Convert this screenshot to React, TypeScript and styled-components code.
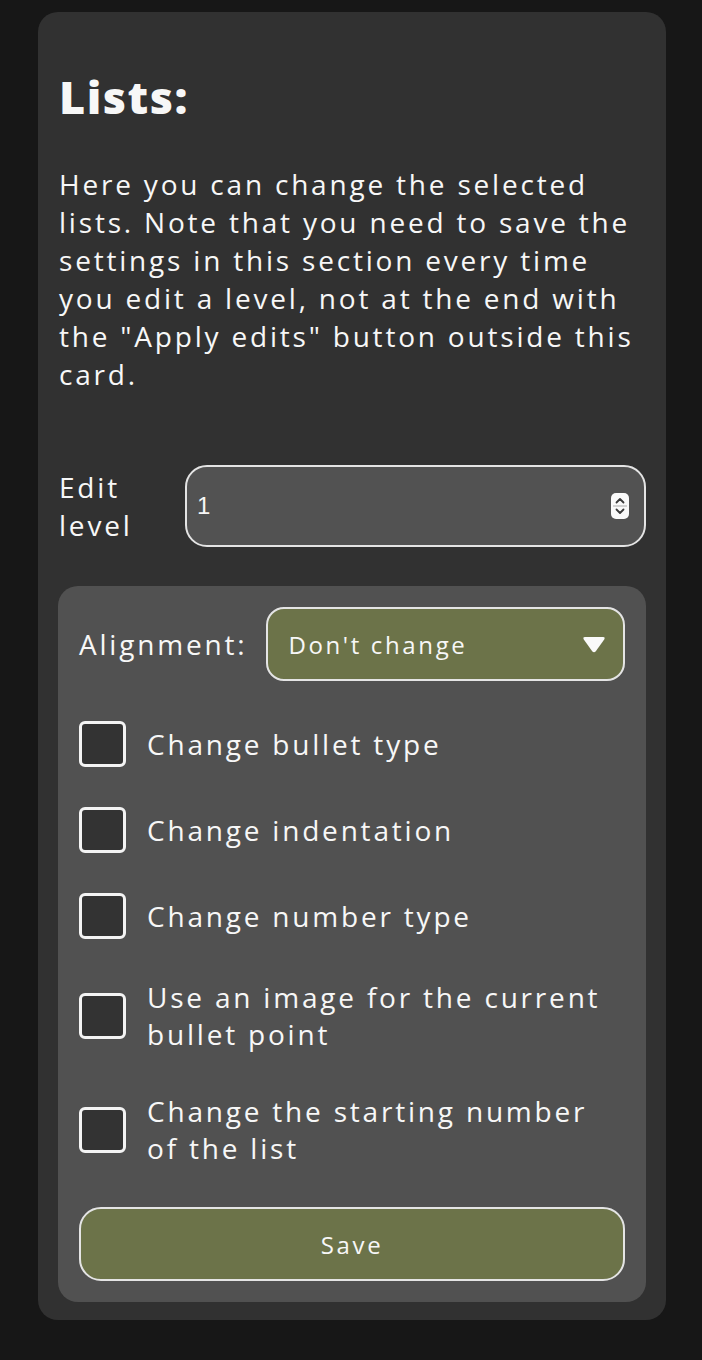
import styled, { createGlobalStyle } from "styled-components";
import { FC } from "react";

const GlobalStyle = createGlobalStyle`
  html, body {
    margin: 0;
    padding: 0;
    background: #171717;
  }

  body {
    font-family: "Open Sans", "DejaVu Sans", sans-serif;
    color: #f7f7f7;
  }

  * {
    box-sizing: border-box;
  }
`;

const Page = styled.div`
  min-height: 1360px;
  padding: 12px 36px 40px 38px;
`;

const Card = styled.section`
  background: #313131;
  border-radius: 20px;
  padding: 20px 20px 18px;
`;

const Title = styled.h2`
  margin: 38px 0 0;
  padding-left: 1px;
  font-size: 45px;
  line-height: 54px;
  font-weight: 800;
  letter-spacing: 1.5px;
`;

const Description = styled.p`
  margin: 41px 0 0;
  padding-left: 1px;
  font-size: 28px;
  line-height: 38px;
  letter-spacing: 0.1em;
`;

const EditRow = styled.div`
  margin-top: 72px;
  display: flex;
  align-items: center;
  gap: 26px;
  padding-left: 1px;
`;

const FieldLabel = styled.label<{ $width?: number }>`
  flex-shrink: 0;
  width: ${({ $width }) => ($width ? `${$width}px` : "auto")};
  font-size: 28px;
  line-height: 38px;
  letter-spacing: 0.1em;
`;

const NumberField = styled.div`
  position: relative;
  flex: 1;
`;

const NumberInput = styled.input`
  width: 100%;
  height: 82px;
  margin: 0;
  padding: 0 40px 0 10px;
  border: 2px solid #e4e4e4;
  border-radius: 22px;
  background: #525252;
  color: #f7f7f7;
  font-family: "Liberation Sans", Arial, sans-serif;
  font-size: 24px;
  outline: none;
  appearance: textfield;

  &::-webkit-inner-spin-button,
  &::-webkit-outer-spin-button {
    -webkit-appearance: none;
    margin: 0;
  }
`;

const Spinner = styled.svg`
  position: absolute;
  right: 17px;
  top: 28px;
  pointer-events: none;
`;

const Panel = styled.div`
  margin-top: 39px;
  background: #515151;
  border-radius: 20px;
  padding: 21px;
  display: flex;
  flex-direction: column;
  gap: 40px;
`;

const AlignRow = styled.div`
  display: flex;
  align-items: center;
  gap: 19px;
`;

const SelectWrap = styled.div`
  position: relative;
  flex: 1;
`;

const Select = styled.select`
  width: 100%;
  height: 74px;
  margin: 0;
  padding: 0 50px 0 20px;
  border: 2px solid #e4e4e4;
  border-radius: 18px;
  background: #6c7349;
  color: #f7f7f7;
  font-family: "Open Sans", "DejaVu Sans", sans-serif;
  font-size: 24px;
  letter-spacing: 0.11em;
  appearance: none;
  outline: none;
`;

const Caret = styled.svg`
  position: absolute;
  right: 19px;
  top: 29px;
  pointer-events: none;
`;

const CheckRow = styled.label`
  display: flex;
  align-items: center;
  gap: 21px;
  cursor: pointer;
`;

const CheckBox = styled.input`
  flex-shrink: 0;
  width: 47px;
  height: 46px;
  margin: 0;
  border: 3px solid #f4f4f4;
  border-radius: 6px;
  background: #333333;
  appearance: none;
`;

const CheckText = styled.span`
  font-size: 28px;
  line-height: 37px;
  letter-spacing: 0.1em;
`;

const SaveButton = styled.button`
  height: 74px;
  border: 2px solid #e4e4e4;
  border-radius: 22px;
  background: #6c7349;
  color: #f7f7f7;
  font-family: "Open Sans", "DejaVu Sans", sans-serif;
  font-size: 24px;
  letter-spacing: 0.11em;
  cursor: pointer;
`;

const options = [
  "Change bullet type",
  "Change indentation",
  "Change number type",
  "Use an image for the current bullet point",
  "Change the starting number of the list",
];

const App: FC = () => (
  <Page>
    <GlobalStyle />
    <Card>
      <Title>Lists:</Title>
      <Description>
        Here you can change the selected lists. Note that you need to save the
        settings in this section every time you edit a level, not at the end
        with the "Apply edits" button outside this card.
      </Description>

      <EditRow>
        <FieldLabel $width={100} htmlFor="edit-level">
          Edit level
        </FieldLabel>
        <NumberField>
          <NumberInput id="edit-level" type="number" defaultValue={1} min={1} />
          <Spinner width="18" height="26" viewBox="0 0 18 26">
            <rect x="0" y="0" width="18" height="26" rx="5" fill="#fafafa" />
            <line x1="2" y1="13" x2="16" y2="13" stroke="#c4c4c4" strokeWidth="1.5" />
            <path d="M5.5 9.5 L9 6 L12.5 9.5" fill="none" stroke="#3a3a3a" strokeWidth="1.8" strokeLinecap="round" strokeLinejoin="round" />
            <path d="M5.5 16.5 L9 20 L12.5 16.5" fill="none" stroke="#3a3a3a" strokeWidth="1.8" strokeLinecap="round" strokeLinejoin="round" />
          </Spinner>
        </NumberField>
      </EditRow>

      <Panel>
        <AlignRow>
          <FieldLabel htmlFor="alignment">Alignment:</FieldLabel>
          <SelectWrap>
            <Select id="alignment" defaultValue="none">
              <option value="none">Don't change</option>
              <option value="left">Left</option>
              <option value="center">Center</option>
              <option value="right">Right</option>
            </Select>
            <Caret width="24" height="17" viewBox="0 0 24 17">
              <path
                d="M3 1 H21 Q23.6 1 22.2 3.4 L13.8 15.2 Q12 17.2 10.2 15.2 L1.8 3.4 Q0.4 1 3 1 Z"
                fill="#fafafa"
              />
            </Caret>
          </SelectWrap>
        </AlignRow>

        {options.map((text) => (
          <CheckRow key={text}>
            <CheckBox type="checkbox" />
            <CheckText>{text}</CheckText>
          </CheckRow>
        ))}

        <SaveButton type="button">Save</SaveButton>
      </Panel>
    </Card>
  </Page>
);

export default App;
